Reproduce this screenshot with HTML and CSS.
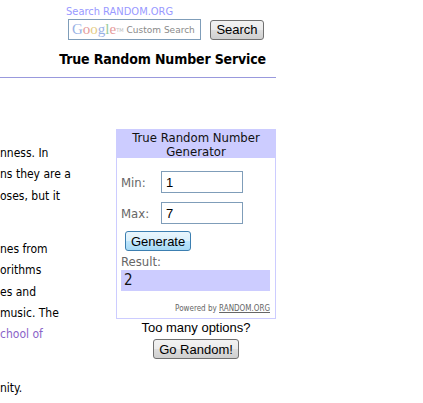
FILE: index.html
```html
<!DOCTYPE html>
<html lang="en">
<head>
    <meta charset="UTF-8">
    <title>RANDOM.ORG - True Random Number Service</title>
    <link rel="stylesheet" href="styles.css">
</head>
<body>
    <div class="page">
        <div class="search">
            <div class="search-label">Search RANDOM.ORG</div>
            <div class="search-row">
                <div class="search-input"><span class="g-logo"><span class="g-b">G</span><span class="g-r">o</span><span class="g-y">o</span><span class="g-b">g</span><span class="g-g">l</span><span class="g-r">e</span></span><sup class="tm">TM</sup> Custom Search</div>
                <button class="btn search-btn">Search</button>
            </div>
        </div>
        <h1 class="site-title">True Random Number Service</h1>
        <div class="rule"></div>

        <div class="content">
            <div class="intro">
                <p>
                    <span class="line">nness. In</span>
                    <span class="line">ns they are a</span>
                    <span class="line">oses, but it</span>
                    <span class="line">&nbsp;</span>
                </p>
                <p>
                    <span class="line">nes from</span>
                    <span class="line">orithms</span>
                    <span class="line">es and</span>
                    <span class="line">music. The</span>
                    <span class="line"><a href="#">chool of</a></span>
                    <span class="line">&nbsp;</span>
                </p>
                <p>
                    <span class="line">nity.</span>
                </p>
            </div>

            <div class="side">
                <div class="widget">
                    <div class="widget-head">True Random Number Generator</div>
                    <div class="widget-body">
                        <div class="field">
                            <span class="field-label">Min:</span>
                            <input class="field-input" type="text" value="1">
                        </div>
                        <div class="field">
                            <span class="field-label">Max:</span>
                            <input class="field-input" type="text" value="7">
                        </div>
                        <button class="btn generate-btn">Generate</button>
                        <div class="result-label">Result:</div>
                        <div class="result">2</div>
                        <div class="powered">Powered by <a href="#">RANDOM.ORG</a></div>
                    </div>
                </div>
                <div class="options">Too many options?</div>
                <button class="btn random-btn">Go Random!</button>
            </div>
        </div>
    </div>
</body>
</html>
```

FILE: styles.css
```css
* {
    margin: 0;
    padding: 0;
    box-sizing: border-box;
}

body {
    background: #ffffff;
    color: #000000;
    font-family: 'DejaVu Sans Condensed', 'DejaVu Sans', sans-serif;
    font-size: 12px;
}

.page {
    width: 276px;
}

/* search box */
.search {
    padding: 5px 0 0 66px;
}

.search-label {
    color: #9999ff;
    font-size: 11px;
    line-height: 13px;
}

.search-row {
    display: flex;
    align-items: center;
    gap: 9px;
    margin-top: 1px;
    margin-left: 2px;
}

.search-input {
    width: 133px;
    height: 21px;
    border: 1px solid #7f9db9;
    padding-left: 3px;
    font-family: 'DejaVu Sans', sans-serif;
    font-size: 9px;
    color: #8a8a8a;
    display: flex;
    align-items: center;
    white-space: nowrap;
}

.g-logo {
    font-family: 'Liberation Serif', serif;
    font-size: 15px;
    opacity: 0.5;
}

.g-b { color: #3366cc; }
.g-r { color: #cc3333; }
.g-y { color: #cc9900; }
.g-g { color: #339933; }

.tm {
    font-size: 5px;
    margin-right: 3px;
    opacity: 0.6;
}

.btn {
    font-family: 'Liberation Sans', Arial, sans-serif;
    font-size: 13px;
    color: #000000;
    border: 1px solid #707070;
    border-radius: 3px;
    background: linear-gradient(#f2f2f2, #ebebeb 50%, #dddddd 51%, #cfcfcf);
    padding: 0 5px;
    height: 20px;
}

.search-btn {
    width: 54px;
}

.site-title {
    font-size: 14px;
    font-weight: bold;
    letter-spacing: -0.15px;
    text-align: right;
    padding-right: 10px;
    margin-top: 10px;
    line-height: 18px;
}

.rule {
    height: 1px;
    background: #9999dd;
    margin-top: 9px;
}

/* main content */
.content {
    display: flex;
    justify-content: space-between;
    margin-top: 51px;
}

.intro {
    width: 110px;
    overflow: hidden;
    padding-top: 14px;
}

.intro p {
    margin-bottom: 11px;
}

.line {
    display: block;
    white-space: nowrap;
    line-height: 21.25px;
    font-size: 12px;
}

.intro a {
    color: #8a63c8;
    text-decoration: none;
}

.side {
    width: 160px;
    display: flex;
    flex-direction: column;
    align-items: center;
}

.widget {
    width: 160px;
    border: 1px solid #ccccff;
}

.widget-head {
    background: #ccccff;
    color: #111111;
    text-align: center;
    font-size: 13px;
    line-height: 14px;
    padding: 1px 10px;
    height: 28px;
}

.widget-body {
    padding: 13px 5px 4px 4px;
}

.field {
    display: flex;
    align-items: center;
    margin-bottom: 9px;
}

.field-label {
    width: 40px;
    color: #666666;
    font-size: 13px;
}

.field-input {
    width: 82px;
    height: 22px;
    border: 1px solid #7f9db9;
    font-family: 'Liberation Sans', Arial, sans-serif;
    font-size: 13px;
    padding: 0 4px;
    color: #000000;
}

.generate-btn {
    margin-left: 4px;
    width: 66px;
    height: 20px;
    border-color: #3c7fb1;
    background: linear-gradient(#eaf6fd, #d9f0fc 50%, #bee6fd 51%, #a7d9f5);
    margin-top: -2px;
}

.result-label {
    color: #666666;
    font-size: 13px;
    line-height: 16px;
    margin-top: 3px;
}

.result {
    background: #ccccff;
    height: 21px;
    font-size: 15px;
    line-height: 21px;
    padding-left: 3px;
    color: #111111;
}

.powered {
    text-align: right;
    font-size: 8px;
    color: #666666;
    margin-top: 13px;
    line-height: 10px;
}

.powered a {
    color: #666666;
}

.options {
    font-family: 'Liberation Sans', Arial, sans-serif;
    font-size: 13px;
    margin-top: 1px;
    line-height: 15px;
}

.random-btn {
    margin-top: 4px;
    width: 86px;
}
```
